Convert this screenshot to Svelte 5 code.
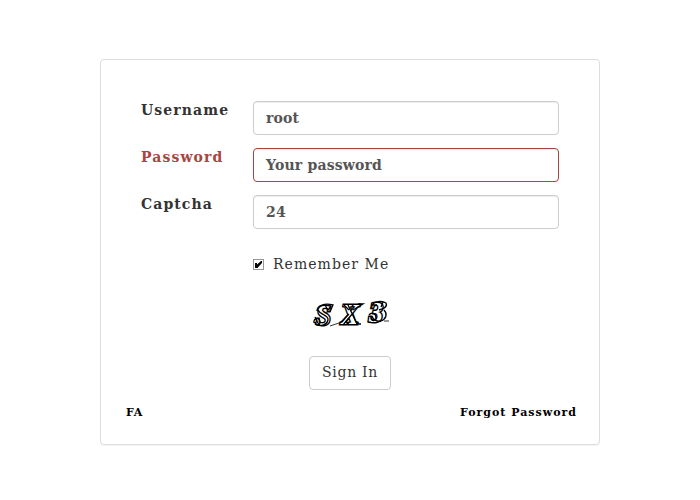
<script>
  const fields = [
    { id: 'username', label: 'Username', value: 'root', error: false },
    { id: 'password', label: 'Password', value: 'Your password', error: true },
    { id: 'captcha', label: 'Captcha', value: '24', error: false }
  ];
</script>

<main>
  <section class="panel">
    <form>
      {#each fields as field}
        <div class="row {field.id}" class:error={field.error}>
          <label for={field.id}>{field.label}</label>
          <div class="control" id={field.id}><span>{field.value}</span></div>
        </div>
      {/each}
      <div class="remember">
        <svg class="check" width="11" height="11" viewBox="0 0 11 11">
          <rect x=".5" y=".5" width="10" height="10" fill="#fff" stroke="#9b9895" />
          <path d="M2 4h2v1.5L8 2h1v2L4.5 9H2z" fill="#080808" />
        </svg>
        <span>Remember Me</span>
      </div>
      <svg class="captcha-art" width="90" height="40" viewBox="0 0 90 40">
        <g class="glyphs" fill="#fff" stroke="#000" stroke-width="3" paint-order="stroke">
          <text x="11" y="34" textLength="15" lengthAdjust="spacingAndGlyphs">S</text>
          <text x="36" y="33" textLength="18" lengthAdjust="spacingAndGlyphs">X</text>
          <text x="64" y="31" textLength="14" lengthAdjust="spacingAndGlyphs">3</text>
        </g>
        <g fill="none" stroke="#000" stroke-width="1.3">
          <path d="M12 20c0-6 8-8 16-6l-3 7M13 19c2 5 11 5 10 10-1 5-8 7-13 4M9 32c-1-6 6-6 6-1s-5 3-5 0M20 14l3 5 3-4M10 26l4 8" />
          <path d="M39 14l5 5M43 14l9 19h4M48 19l10-6h-5M35 32l9-9M38 34l10-12" />
          <path d="M67 17c-2-6 9-8 14-5 2 4-3 6-7 7M66 14h6M79 19c4 4 2 9-3 11-4 1-8-1-9-5M64 24c3-4 7-1 7 3s-6 3-5-1M78 11l-2 5" />
          <path d="M25 35 34 32M63 31h3M79 30h5" stroke-width=".8" />
        </g>
      </svg>
      <button type="button"><span>Sign In</span></button>
    </form>
    <footer><span class="lang">FA</span><span class="forgot">Forgot Password</span></footer>
  </section>
</main>

<style>
  :global(body) { background: #fff; }
  main { box-sizing: border-box; height: 500px; padding: 59px 100px 0; font-family: "DejaVu Serif", serif; color: #333; }
  .panel { box-sizing: border-box; height: 386px; border: 1px solid #ddd; border-radius: 4px; padding: 41px 40px 0; box-shadow: 0 1px 1px rgba(0, 0, 0, .05); }
  form { display: flex; flex-direction: column; }
  .row { display: flex; height: 34px; margin-bottom: 13px; }
  label { width: 112px; font-size: 14px; line-height: 18px; font-weight: bold; letter-spacing: 1.1px; white-space: nowrap; }
  .control { box-sizing: border-box; width: 306px; height: 34px; padding: 0 12px; border: 1px solid #ccc; border-radius: 4px; box-shadow: inset 0 1px 1px rgba(0, 0, 0, .075); color: #555; font-size: 14px; line-height: 32px; font-weight: bold; letter-spacing: .18px; white-space: nowrap; }
  .error label { color: #a94442; }
  .error .control { border-color: #a94442; }
  .remember { display: flex; align-items: center; height: 20px; margin: 12px 0 0 112px; font-size: 14px; letter-spacing: 1.05px; }
  .check { margin-right: 9px; }
  .captcha-art { margin: 17px 0 0 164px; }
  .glyphs { font: italic bold 29px "Liberation Serif", serif; }
  button { width: 82px; height: 34px; margin: 25px 0 0 168px; padding: 0 0 2px; background: #fff; border: 1px solid #ccc; border-radius: 4px; color: #333; font-family: inherit; font-size: 14px; letter-spacing: .7px; }
  footer { display: flex; justify-content: space-between; margin: 14px -18px 0 -15px; color: #000; font-size: 11px; line-height: 18px; font-weight: bold; }
  .forgot { letter-spacing: 1px; }
  .lang { letter-spacing: .5px; }
</style>
